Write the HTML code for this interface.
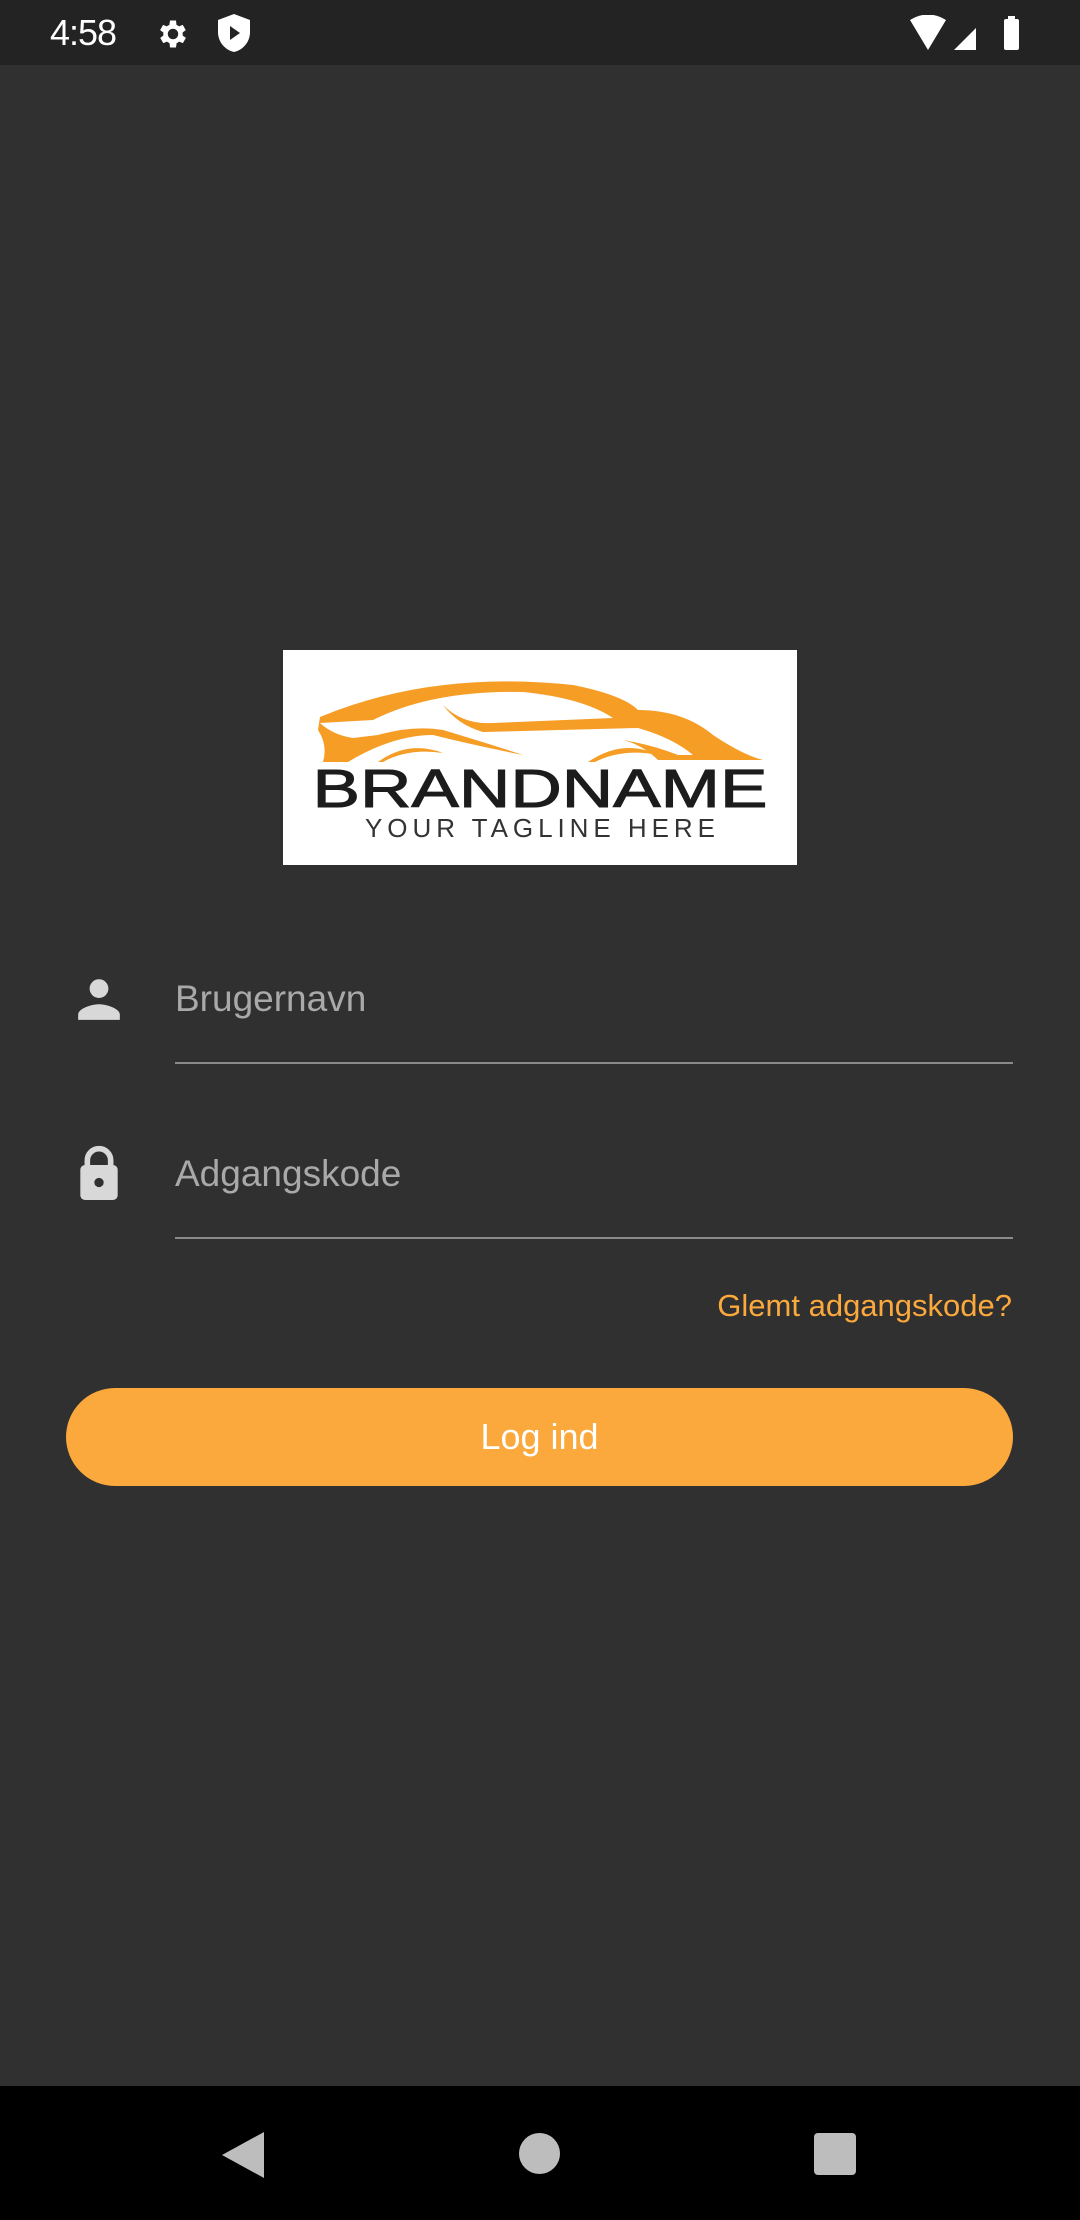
<!DOCTYPE html>
<html><head><meta charset="utf-8"><style>
*{margin:0;padding:0;box-sizing:border-box}
body{width:1080px;height:2220px;background:#303030;font-family:"Liberation Sans",sans-serif;position:relative;overflow:hidden}
.sb{position:absolute;left:0;top:0;width:1080px;height:65px;background:#232323;color:#fff}
.abs{position:absolute}
.field{position:absolute;left:175px;width:838px;border-bottom:2px solid #8a8a8a;color:#a9a9a9;font-size:37px}
.nav{position:absolute;left:0;top:2086px;width:1080px;height:134px;background:#000}
</style></head><body>
<div class="sb">
<div class="abs" style="left:50px;top:12px;font-size:36px;letter-spacing:-1px">4:58</div>
<svg class="abs" style="left:155px;top:16px" width="36" height="36" viewBox="0 0 24 24"><path fill="#fff" d="M19.4 13a7.5 7.5 0 000-2l2.1-1.6-2-3.5-2.5 1a7 7 0 00-1.7-1L15 3h-4l-.4 2.9a7 7 0 00-1.7 1l-2.5-1-2 3.5L6.6 11a7.5 7.5 0 000 2l-2.1 1.6 2 3.5 2.5-1a7 7 0 001.7 1L11 21h4l.4-2.9a7 7 0 001.7-1l2.5 1 2-3.5zM13 15.5a3.5 3.5 0 110-7 3.5 3.5 0 010 7z" transform="translate(-1 0)"/></svg>
<svg class="abs" style="left:218px;top:14px" width="32" height="38" viewBox="0 0 16 19"><path fill="#fff" d="M8 0L0 3v6c0 5 3.5 9 8 10 4.5-1 8-5 8-10V3z"/><path fill="#232323" d="M6 6v7l5-3.5z"/></svg>
<svg class="abs" style="left:910px;top:15px" width="110" height="36" viewBox="0 0 110 36"><path fill="#fff" d="M0 5Q18-6 36 5L18 35z"/><path fill="#fff" d="M44 35L66 13V35z"/><rect x="98" y="1" width="7" height="4" fill="#fff"/><rect x="94" y="4" width="15" height="31" rx="2" fill="#fff"/></svg>
</div>
<div class="abs" style="left:283px;top:650px;width:514px;height:215px;background:#fff">
<svg width="514" height="215" viewBox="0 0 514 215">
<path fill="#f59d25" d="M37 67Q150 20 290 35Q340 45 355 60Q400 60 430 85Q460 105 480 110L375 110Q360 95 340 90Q370 95 395 105L410 105Q390 88 355 78L200 82Q175 75 160 55Q180 75 210 73L330 68Q300 48 240 42Q150 40 90 70L37 73Q50 85 70 88L95 85Q130 75 160 80Q210 95 240 105Q190 95 150 85Q110 85 65 112L40 112Q45 95 35 80z"/>
<path fill="#f59d25" d="M95 112Q125 90 160 103Q125 98 100 112z"/>
<path fill="#f59d25" d="M305 112Q340 88 375 105Q340 98 312 112z"/>
<text x="257" y="157" text-anchor="middle" font-family="Liberation Sans" font-size="54" fill="#1c1c1c" stroke="#1c1c1c" stroke-width="1" textLength="455" lengthAdjust="spacingAndGlyphs">BRANDNAME</text>
<text x="257" y="187" text-anchor="middle" font-family="Liberation Sans" font-size="26" fill="#333" textLength="350" lengthAdjust="spacing">YOUR TAGLINE HERE</text>
</svg></div>
<svg class="abs" style="left:74px;top:974px" width="50" height="50" viewBox="0 0 24 24"><circle cx="12" cy="7" r="4.5" fill="#d8d8d8"/><path fill="#d8d8d8" d="M2 22v-2.5c0-3 6.5-5 10-5s10 2 10 5V22z"/></svg>
<div class="field" style="top:978px;height:86px">Brugernavn</div>
<svg class="abs" style="left:74px;top:1144px" width="50" height="56" viewBox="0 0 20 24"><path fill="none" stroke="#d8d8d8" stroke-width="2.4" d="M5 10V7a5 5 0 0110 0v3"/><rect x="2" y="9" width="16" height="15" rx="2" fill="#d8d8d8"/><circle cx="10" cy="16.5" r="2" fill="#303030"/></svg>
<div class="field" style="top:1153px;height:86px">Adgangskode</div>
<div class="abs" style="right:68px;top:1288px;color:#fba83c;font-size:31px">Glemt adgangskode?</div>
<div class="abs" style="left:66px;top:1388px;width:947px;height:98px;border-radius:49px;background:#fba83c;color:#fff;font-size:36px;text-align:center;line-height:98px">Log ind</div>
<div class="nav">
<svg class="abs" style="left:222px;top:46px" width="42" height="46" viewBox="0 0 42 46"><path fill="#bdbdbd" d="M42 0V46L0 23z"/></svg>
<div class="abs" style="left:519px;top:47px;width:41px;height:41px;border-radius:50%;background:#bdbdbd"></div>
<div class="abs" style="left:814px;top:47px;width:42px;height:42px;border-radius:4px;background:#bdbdbd"></div>
</div>
</body></html>
